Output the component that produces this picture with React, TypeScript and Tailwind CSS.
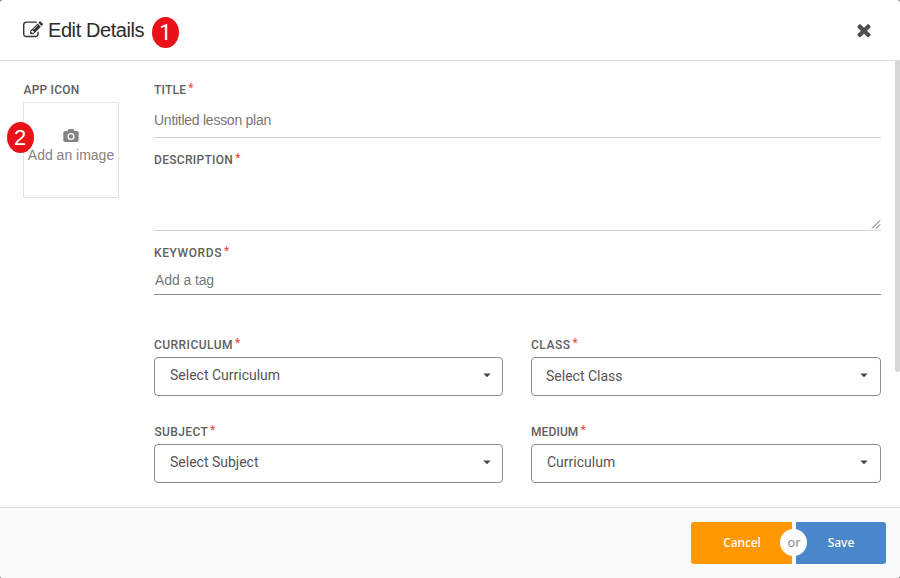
import type { ReactNode } from 'react';

function EditIcon() {
  return (
    <svg className="mt-[20px] h-5 w-5 shrink-0" viewBox="0 0 1792 1792" fill="#333">
      <path d="M888 1184l116-116-152-152-116 116v56h96v96h56zm440-720q-16-16-33 1l-350 350q-17 17-1 33t33-1l350-350q17-17 1-33zm80 594v190q0 119-84.5 203.5t-203.5 84.5h-832q-119 0-203.5-84.5t-84.5-203.5v-832q0-119 84.5-203.5t203.5-84.5h832q63 0 117 25 15 7 18 23 3 17-9 29l-49 49q-14 14-32 8-23-6-45-6h-832q-66 0-113 47t-47 113v832q0 66 47 113t113 47h832q66 0 113-47t47-113v-126q0-13 9-22l64-64q15-15 35-7t20 29zm-96-738l288 288-672 672h-288v-288zm444 132l-92 92-288-288 92-92q28-28 68-28t68 28l152 152q28 28 28 68t-28 68z" />
    </svg>
  );
}

function CloseIcon() {
  return (
    <svg className="h-5 w-5" viewBox="0 0 1792 1792" fill="#4f4f4f">
      <path d="M1490 1322q0 40-28 68l-136 136q-28 28-68 28t-68-28l-294-294-294 294q-28 28-68 28t-68-28l-136-136q-28-28-28-68t28-68l294-294-294-294q-28-28-28-68t28-68l136-136q28-28 68-28t68 28l294 294 294-294q28-28 68-28t68 28l136 136q28 28 28 68t-28 68l-294 294 294 294q28 28 28 68z" />
    </svg>
  );
}

function CameraIcon() {
  return (
    <svg className="h-[13px] w-4" viewBox="0 0 16 13" fill="#848484">
      <path
        fillRule="evenodd"
        d="M5 .9Q5.300 0 6.200 0H9.800Q10.700 0 11 .9L11.400 2H14Q15.700 2 15.700 3.700V11.300Q15.700 13 14 13H2Q.3 13 .3 11.300V3.700Q.3 2 2 2H4.600ZM8 4a3.500 3.500 0 1 0 0 7a3.500 3.500 0 1 0 0-7ZM8 5.200a2.300 2.300 0 1 1 0 4.600a2.300 2.300 0 1 1 0-4.600Z"
      />
    </svg>
  );
}

function Label({ children, className = 'tracking-[0.3px]', required = true }: { children: ReactNode; className?: string; required?: boolean }) {
  return (
    <div className={`flex h-4 items-start whitespace-nowrap font-[Roboto,sans-serif] text-[12px] leading-4 font-medium text-[#606060] ${className}`}>
      <span>{children}</span>
      {required && <span className="-mt-[2px] ml-[2px] text-[12px] leading-4 font-normal tracking-normal text-[#f44336]">*</span>}
    </div>
  );
}

function Select({ value, className, caret = 'right-[11px]' }: { value: string; className: string; caret?: string }) {
  return (
    <button type="button" className={`relative flex h-[39px] w-full items-start rounded-[4px] border border-[#8c8c8c] bg-white font-[Roboto,sans-serif] text-[14px] leading-5 text-[#555] ${className}`}>
      <span>{value}</span>
      <svg className={`absolute top-[15px] h-[5px] w-2 ${caret}`} viewBox="0 0 8 5" fill="#444">
        <path d="M.3 .5H7.700L4 4.300Z" />
      </svg>
    </button>
  );
}

function Badge({ n, className }: { n: number; className: string }) {
  return (
    <span className={`flex h-[31px] w-[27px] shrink-0 items-center justify-center rounded-[50%] bg-[#ea1219] text-[22px] leading-none text-white ${className}`}>
      {n}
    </span>
  );
}

export default function App() {
  return (
    <div className="bg-[#777]">
      <div className="flex h-[578px] w-[900px] flex-col overflow-hidden rounded-[3px] bg-white">
        <header className="flex h-[61px] shrink-0 items-start border-b border-[#dcdcdc] pl-[23px]">
          <EditIcon />
          <h1 className="mt-[18px] ml-[5px] w-[97px] whitespace-nowrap font-['Liberation_Sans',sans-serif] text-[20px] leading-6 tracking-[-0.42px] text-[#2b2b2b]">Edit Details</h1>
          <Badge n={1} className="mt-[17px] ml-[7px] font-[Roboto,sans-serif]" />
          <button className="mt-[20px] mr-[26px] ml-auto"><CloseIcon /></button>
        </header>

        <main className="flex h-[446px] shrink-0 pl-[23px]">
          <section className="w-[131px] shrink-0 pt-[21px]">
            <Label required={false} className="pl-[0.5px] tracking-[0.2px]">APP ICON</Label>
            <div className="relative mt-1 flex h-24 w-24 flex-col items-center border border-[#e3e3e3] pt-[26px]">
              <CameraIcon />
              <span className="mt-[3px] whitespace-nowrap font-['Liberation_Sans',sans-serif] text-[14px] leading-5 text-[#828282]">Add an image</span>
              <Badge n={2} className="absolute top-[19px] -left-[17.5px] font-['Liberation_Sans',sans-serif]" />
            </div>
          </section>

          <form className="w-[727px] shrink-0 pt-[21px]">
            <Label className="tracking-[0.2px]">TITLE</Label>
            <div className="h-10 border-b border-[#d5d5d5] pt-3 font-['Liberation_Sans',sans-serif] text-[14px] leading-5 tracking-[-0.26px] text-[#777]">Untitled lesson plan</div>
            <Label className="mt-[14px] tracking-[0.3px]">DESCRIPTION</Label>
            <div className="flex h-[63px] items-end justify-end border-b border-[#d5d5d5] pb-px">
              <svg className="h-[9px] w-[10px]" viewBox="0 0 10 9" stroke="#555" strokeWidth="1">
                <path d="M1 8.500L9 .5M5 8.500L9 4.500" />
              </svg>
            </div>
            <Label className="mt-[14px] tracking-[0.6px]">KEYWORDS</Label>
            <div className="h-[34px] border-b border-[#8c8c8c] pt-[9px] pl-px font-['Liberation_Sans',sans-serif] text-[14px] leading-5 tracking-[-0.1px] text-[#777]">Add a tag</div>
            <div className="mt-[42px] grid grid-cols-[349px_350px] gap-x-7 gap-y-7">
              <div>
                <Label className="mb-1 tracking-[0.45px]">CURRICULUM</Label>
                <Select value="Select Curriculum" className="pt-[7px] pl-[15px]" />
              </div>
              <div>
                <Label className="mb-1 tracking-[0.5px]">CLASS</Label>
                <Select value="Select Class" className="pt-2 pl-[14px]" caret="right-[12px]" />
              </div>
              <div>
                <Label className="mb-1 pl-[0.5px] tracking-[0.35px]">SUBJECT</Label>
                <Select value="Select Subject" className="pt-[7px] pl-[15px]" />
              </div>
              <div>
                <Label className="mb-1 tracking-[0.1px]">MEDIUM</Label>
                <Select value="Curriculum" className="pt-[7px] pl-[15px]" caret="right-[12px]" />
              </div>
            </div>
          </form>
          <div className="ml-auto h-[311px] w-[5px] rounded-b-[2px] bg-[#d7d7d7]" />
        </main>

        <footer className="flex h-[71px] shrink-0 justify-end border-t border-[#d7dade] bg-[#f9fafc] pt-[14px] pr-[14px]">
          <div className="relative flex h-[42px] w-[195px] gap-1 rounded-[3px] bg-white font-['Noto_Sans',sans-serif] text-[12px] font-medium text-white">
            <button className="w-[101px] rounded-l-[3px] bg-[#ff9800] pl-px tracking-[-0.1px]">Cancel</button>
            <button className="w-[90px] rounded-r-[3px] bg-[#4a87ca]">Save</button>
            <span className="absolute top-[7px] left-[89px] flex h-[27px] w-[27px] items-center justify-center rounded-full bg-white pl-px text-[13px] font-normal text-[#888]">or</span>
          </div>
        </footer>
      </div>
    </div>
  );
}
